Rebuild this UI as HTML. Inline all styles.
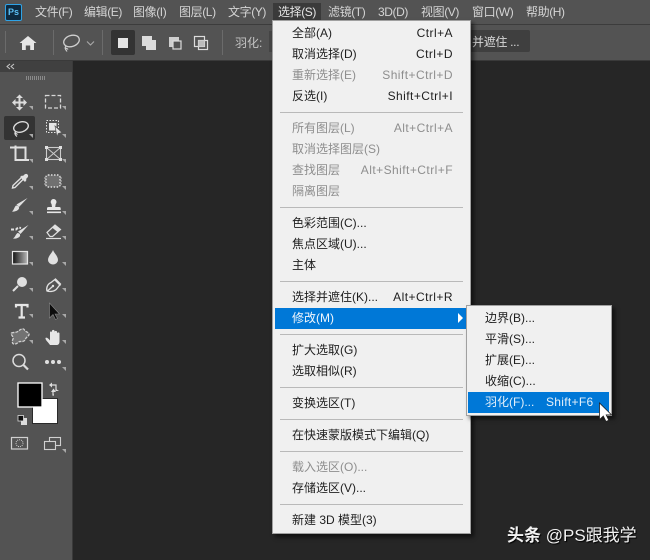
<!DOCTYPE html>
<html><head><meta charset="utf-8">
<style>
html,body{margin:0;padding:0}
body{width:650px;height:560px;overflow:hidden;position:relative;background:#262626;font-family:"Liberation Sans","Noto Sans CJK SC",sans-serif;font-size:12px;color:#222}
.a{position:absolute}
.mb{position:absolute;top:3px;height:18px;line-height:18px;color:#d4d4d4;font-size:12px;white-space:nowrap;letter-spacing:-.4px}
.i{position:absolute;left:19px;height:21px;line-height:21px;white-space:nowrap;color:#1e1e1e}
.k{position:absolute;right:17px;height:21px;line-height:21px;white-space:nowrap;color:#1e1e1e;letter-spacing:.45px}
.d{color:#8e8e8e}
.s{position:absolute;left:7px;right:7px;height:1px;background:#b9b9b9}
svg{position:absolute;left:0;top:0}
</style></head><body>
<div class="a" style="left:0;top:0;width:650px;height:24px;background:#535353"></div>
<div class="a" style="left:0;top:24px;width:650px;height:1px;background:#3c3c3c"></div>
<div class="a" style="left:0;top:25px;width:650px;height:35px;background:#535353"></div>
<div class="a" style="left:0;top:60px;width:650px;height:1px;background:#3a3a3a"></div>
<div class="a" style="left:0;top:61px;width:72px;height:499px;background:#535353"></div>
<div class="a" style="left:0;top:61px;width:72px;height:11px;background:#404040"></div>
<div class="a" style="left:72px;top:61px;width:1px;height:499px;background:#3a3a3a"></div>
<div class="a" style="left:5px;top:4px;width:15px;height:15px;background:#0e2a3f;border:1px solid #2fa3e6;border-radius:2px;color:#5cc0f5;font-size:9px;font-weight:bold;line-height:15px;text-align:center">Ps</div>
<div class="mb" style="left:35px">文件(F)</div>
<div class="mb" style="left:84px">编辑(E)</div>
<div class="mb" style="left:133px">图像(I)</div>
<div class="mb" style="left:179px">图层(L)</div>
<div class="mb" style="left:228px">文字(Y)</div>
<div class="a" style="left:273px;top:3px;width:48px;height:17px;background:#3a3a3a"></div>
<div class="mb" style="left:278px;color:#e4e4e4">选择(S)</div>
<div class="mb" style="left:328px">滤镜(T)</div>
<div class="mb" style="left:378px">3D(D)</div>
<div class="mb" style="left:421px">视图(V)</div>
<div class="mb" style="left:472px">窗口(W)</div>
<div class="mb" style="left:526px">帮助(H)</div>

<svg width="650" height="560" viewBox="0 0 650 560" fill="none">
<!-- grips / separators -->
<g fill="#6b6b6b"><rect x="5" y="31" width="1" height="22"/><rect x="53" y="30" width="1" height="25"/><rect x="102" y="30" width="1" height="25"/><rect x="222" y="30" width="1" height="25"/></g>
<!-- home -->
<path d="M28 36l8.500 7h-2.500v7h-3.800v-4.500h-4.400v4.500h-3.800v-7h-2.500z" fill="#e6e6e6"/>
<!-- lasso options -->
<ellipse cx="71.500" cy="41" rx="8" ry="5.500" transform="rotate(-18 71.500 41)" stroke="#cfcfcf" stroke-width="1.300"/>
<path d="M66 46c-2 2 0 4 1 5.500M65 47.500c1 1 2.500 1 3 2" stroke="#cfcfcf" stroke-width="1.100"/>
<path d="M87 41.500l3.500 3.500 3.500-3.500" stroke="#aaa" stroke-width="1.100"/>
<rect x="111" y="30" width="24" height="25" rx="2" fill="#333"/>
<rect x="118" y="38" width="10" height="10" fill="#e4e4e4"/>
<rect x="142" y="36" width="10" height="10" fill="#dcdcdc"/><rect x="146" y="40" width="10" height="10" fill="#dcdcdc"/>
<rect x="169" y="37" width="10" height="10" fill="#cfcfcf"/><rect x="173" y="41" width="8" height="8" fill="#535353" stroke="#dcdcdc" stroke-width="1.200"/>
<rect x="194.500" y="36.500" width="10" height="10" stroke="#dcdcdc" stroke-width="1.200"/><rect x="198.500" y="40.500" width="9" height="9" stroke="#dcdcdc" stroke-width="1.200"/><rect x="198.500" y="40.500" width="6" height="6" fill="#bbb"/>
<!-- panel top -->
<path d="M10 64l-3 2.500 3 2.500M14 64l-3 2.500 3 2.500" stroke="#c8c8c8"/>
<g fill="#8a8a8a"><rect x="26" y="76" width="1" height="4"/><rect x="28" y="76" width="1" height="4"/><rect x="30" y="76" width="1" height="4"/><rect x="32" y="76" width="1" height="4"/><rect x="34" y="76" width="1" height="4"/><rect x="36" y="76" width="1" height="4"/><rect x="38" y="76" width="1" height="4"/><rect x="40" y="76" width="1" height="4"/><rect x="42" y="76" width="1" height="4"/><rect x="44" y="76" width="1" height="4"/></g>
<!-- selected tool bg -->
<rect x="4" y="116" width="31" height="24" rx="2" fill="#333"/>
<!-- corner marks -->
<g fill="#a8a8a8">
<path d="M33 110v-4h-4z M66 110v-4h-4z M33 138v-4h-4z M66 138v-4h-4z M33 163v-4h-4z M66 163v-4h-4z M33 190v-4h-4z M66 190v-4h-4z M33 215v-4h-4z M66 215v-4h-4z M33 240v-4h-4z M66 240v-4h-4z M33 266v-4h-4z M66 266v-4h-4z M33 292v-4h-4z M66 292v-4h-4z M33 318v-4h-4z M66 318v-4h-4z M33 344v-4h-4z M66 344v-4h-4z M66 371v-4h-4z M66 453v-4h-4z"/>
</g>
<!-- move -->
<path d="M19.500 96v13M13 102.500h13" stroke="#dcdcdc" stroke-width="2"/>
<path d="M19.500 94.500l-3.500 3.500h7zM19.500 110.500l-3.500-3.500h7zM12 102.500l3.500-3.500v7zM27 102.500l-3.500-3.500v7z" fill="#dcdcdc"/>
<!-- marquee -->
<rect x="45.500" y="95.500" width="15" height="12.500" stroke="#d8d8d8" stroke-width="1.300" stroke-dasharray="4 2"/>
<!-- lasso -->
<ellipse cx="21" cy="127" rx="7.500" ry="5" transform="rotate(-18 21 127)" stroke="#dcdcdc" stroke-width="1.400"/>
<path d="M16 131.500c-2 1.500-1 3.500 1 5M15 133c1 .5 2 1 2.500 1.500" stroke="#dcdcdc" stroke-width="1.200"/>
<!-- object select -->
<rect x="46.500" y="120.500" width="12" height="12" stroke="#e4e4e4" stroke-dasharray="1.500 1.500"/>
<rect x="49" y="123" width="7.500" height="7.500" fill="#e4e4e4"/>
<path d="M55 126l7 6.500-3.800 1-1.200 3.500z" fill="#e4e4e4" stroke="#535353" stroke-width=".7"/>
<!-- crop -->
<path d="M10 147.500h15.500v12.500M15.500 145.500v14.500h13.500" stroke="#e0e0e0" stroke-width="2"/>
<!-- slice frame -->
<rect x="46.500" y="147.500" width="14" height="12" stroke="#ccc" stroke-width="1.100"/>
<path d="M46.500 147.500l14 12M60.500 147.500l-14 12" stroke="#ccc"/>
<g fill="#e0e0e0"><rect x="45" y="146" width="3" height="3"/><rect x="59" y="146" width="3" height="3"/><rect x="45" y="158" width="3" height="3"/><rect x="59" y="158" width="3" height="3"/></g>
<!-- eyedropper -->
<path d="M21 178l-8 7.500-.5 2.500 2.500-.5 8-8" stroke="#e0e0e0" stroke-width="1.400"/>
<path d="M20 177l5 5 1.500-2-.5-1c2.500-2 2.500-3.500 1.500-4.500s-2.500-1-4.500 1.500l-1-.5z" fill="#e0e0e0"/>
<!-- healing -->
<rect x="46" y="175" width="14" height="12" rx="2" fill="#707070" stroke="#e0e0e0" stroke-dasharray="1.500 1.500" stroke-width="1.400"/>
<path d="M44 178h2M44 181h2M44 184h2M60 178h2M60 181h2M60 184h2" stroke="#ddd" stroke-width=".8"/>
<!-- brush -->
<path d="M27.500 198l-8.500 9-2.500-2.500z" fill="#e0e0e0"/><path d="M16 205.500c2 0 3.500 1.500 3 3-1 2.500-5 3.500-7 3 2-1.500 2-4 4-6z" fill="#e0e0e0"/>
<!-- stamp -->
<path d="M53.500 199a3 3 0 0 1 2.200 5l-.5 3h4c1 0 1.500.5 1.500 1.500v1.500H47v-1.500c0-1 .5-1.500 1.500-1.500h3.500l-.5-3a3 3 0 0 1 2-5z" fill="#e6e6e6"/><rect x="47" y="211.500" width="14" height="1.600" fill="#e6e6e6"/>
<!-- history brush -->
<path d="M28.500 225l-8 9-2.500-2.500z" fill="#e0e0e0"/><path d="M17.500 233c2 0 3 1.500 2.500 3-1 2-4.500 3-7 2.500 2-1 2.500-4 4.500-5.500z" fill="#e0e0e0"/>
<path d="M11 229.500h5c2-2 3-2 5-1.500" stroke="#e0e0e0" stroke-width="2" stroke-dasharray="3 1.500"/>
<!-- eraser -->
<path d="M47 232.500l8-7.500 5.500 4.500-8 7h-2.500z" stroke="#e0e0e0" stroke-width="1.200"/><path d="M52 227.500l3-2.500 5.500 4.500-3 2.500z" fill="#e0e0e0"/><path d="M46 238.500h15" stroke="#e0e0e0" stroke-width="1.200"/>
<!-- gradient -->
<defs><linearGradient id="g"><stop offset="0" stop-color="#111"/><stop offset="1" stop-color="#b8b8b8"/></linearGradient></defs>
<rect x="12.500" y="251.500" width="15" height="12.500" fill="url(#g)" stroke="#e6e6e6" stroke-width="1.200"/>
<!-- blur drop -->
<path d="M53 250c1 3 5 6 5 10a5 4.500 0 0 1-10 0c0-4 4-7 5-10z" fill="#e0e0e0"/>
<!-- dodge -->
<circle cx="22" cy="282" r="5" fill="#e0e0e0"/><path d="M18 286l-5 5" stroke="#e0e0e0" stroke-width="2"/>
<!-- pen -->
<path d="M47 291c-1-3 .5-7 4-8.500l4.500-3.500 5 5-3.500 4.500c-2 3-7 3.500-10 2.500zM47.500 291l5-4.500M54.500 279.500l6 6" stroke="#e0e0e0" stroke-width="1.300"/>
<circle cx="53" cy="286" r="1.200" fill="#e0e0e0"/>
<!-- type -->
<path d="M16 307.500v-2.500h11.500v2.500M21.700 305v12.500M18.500 317.500h6.500" stroke="#e6e6e6" stroke-width="2.200"/>
<!-- direct select -->
<path d="M49.500 303v15l3.500-3.500 2.500 5 2-1-2.500-4.500h4.500z" fill="#0c0c0c" stroke="#888" stroke-width=".6"/>
<!-- custom shape -->
<path d="M11.500 333c2-1 5 0 7-2s5-3 6-1 4 2 4.500 4-3 3-3.500 5-3 3-5 2.500-3 3-6.500 2.500c-2 0-2-3-1-5s-3-5-1.500-6z" fill="#727272" stroke="#d0d0d0" stroke-width="1.300" stroke-dasharray="3 1"/>
<!-- hand -->
<path d="M50 345c-1-2-5-5-4.500-7 1-1 3 .5 4.500 2.500v-8c0-1.500 2-1.500 2 0v-1.500c0-1.500 2.500-1.500 2.500 0v1c0-1.500 2.500-1.500 2.500 0v1.500c0-1.500 2.500-1.500 2.500 0v8c0 2-1 3.500-2.500 3.500z" fill="#e6e6e6"/>
<!-- zoom -->
<circle cx="19" cy="360.500" r="6" stroke="#dcdcdc" stroke-width="1.500"/><path d="M23.500 365l4.500 4.500" stroke="#dcdcdc" stroke-width="2.200"/>
<!-- more -->
<g fill="#e0e0e0"><circle cx="47" cy="362" r="2"/><circle cx="53" cy="362" r="2"/><circle cx="59" cy="362" r="2"/></g>
<!-- colors -->
<rect x="32.500" y="398.500" width="25" height="25" fill="#fff" stroke="#2a2a2a"/>
<rect x="18" y="383" width="24" height="24" fill="#000" stroke="#fff" stroke-width="1.300"/>
<path d="M50 385h6v6M54 395h-1v-4" stroke="#ddd" stroke-width="1.200"/>
<path d="M49 385l3-2.500v5zM53.500 388.500l2.500 3.500h-5zM56 389l3 2-3 0z" fill="#ddd"/>
<rect x="21" y="418" width="6" height="7" fill="#dcdcdc"/><rect x="18" y="415.500" width="5.500" height="5.500" fill="#111" stroke="#ddd" stroke-width=".8"/>
<!-- quick mask -->
<rect x="11.500" y="437.500" width="16" height="11.500" stroke="#d0d0d0" stroke-width="1.200"/><circle cx="19.500" cy="443.200" r="3.500" stroke="#d0d0d0" stroke-dasharray="1 1"/>
<!-- screen mode -->
<rect x="49.500" y="437.500" width="11" height="8" stroke="#d0d0d0" stroke-width="1.100"/><rect x="44.500" y="441.500" width="11" height="8" fill="#535353" stroke="#d0d0d0" stroke-width="1.100"/>
</svg>

<div class="a" style="left:235px;top:35px;color:#c4c4c4;font-size:12px;line-height:16px">羽化:</div>
<div class="a" style="left:269px;top:31px;width:4px;height:21px;background:#454545"></div>
<div class="a" style="left:470px;top:30px;width:60px;height:22px;background:#3f3f3f;border-radius:2px"></div>
<div class="a" style="left:472px;top:34px;color:#d8d8d8;font-size:12px;line-height:16px;white-space:nowrap;letter-spacing:-.3px">并遮住 ...</div>

<!-- main menu -->
<div class="a" style="left:272px;top:20px;width:199px;height:514px;background:#f0f0f0;border:1px solid #a0a0a0;box-sizing:border-box;box-shadow:3px 3px 4px rgba(0,0,0,.55)">
<div class="a" style="left:2px;top:287px;width:193px;height:21px;background:#0078d7"></div>
<div class="i" style="top:2px">全部(A)</div><div class="k" style="top:2px">Ctrl+A</div>
<div class="i" style="top:23px">取消选择(D)</div><div class="k" style="top:23px">Ctrl+D</div>
<div class="i d" style="top:44px">重新选择(E)</div><div class="k d" style="top:44px">Shift+Ctrl+D</div>
<div class="i" style="top:65px">反选(I)</div><div class="k" style="top:65px">Shift+Ctrl+I</div>
<div class="s" style="top:91px"></div>
<div class="i d" style="top:97px">所有图层(L)</div><div class="k d" style="top:97px">Alt+Ctrl+A</div>
<div class="i d" style="top:118px">取消选择图层(S)</div>
<div class="i d" style="top:139px">查找图层</div><div class="k d" style="top:139px">Alt+Shift+Ctrl+F</div>
<div class="i d" style="top:160px">隔离图层</div>
<div class="s" style="top:186px"></div>
<div class="i" style="top:192px">色彩范围(C)...</div>
<div class="i" style="top:213px">焦点区域(U)...</div>
<div class="i" style="top:234px">主体</div>
<div class="s" style="top:260px"></div>
<div class="i" style="top:266px">选择并遮住(K)...</div><div class="k" style="top:266px">Alt+Ctrl+R</div>
<div class="i" style="top:287px;color:#f0f6fc">修改(M)</div>
<div class="a" style="left:185px;top:292px;width:0;height:0;border-left:5px solid #fff;border-top:5px solid transparent;border-bottom:5px solid transparent"></div>
<div class="s" style="top:313px"></div>
<div class="i" style="top:319px">扩大选取(G)</div>
<div class="i" style="top:340px">选取相似(R)</div>
<div class="s" style="top:366px"></div>
<div class="i" style="top:372px">变换选区(T)</div>
<div class="s" style="top:398px"></div>
<div class="i" style="top:404px">在快速蒙版模式下编辑(Q)</div>
<div class="s" style="top:430px"></div>
<div class="i d" style="top:436px">载入选区(O)...</div>
<div class="i" style="top:457px">存储选区(V)...</div>
<div class="s" style="top:483px"></div>
<div class="i" style="top:489px">新建 3D 模型(3)</div>
</div>

<!-- submenu -->
<div class="a" style="left:466px;top:305px;width:146px;height:111px;background:#f0f0f0;border:1px solid #a0a0a0;box-sizing:border-box;box-shadow:3px 3px 4px rgba(0,0,0,.55)">
<div class="a" style="left:1px;top:86px;width:141px;height:21px;background:#0078d7"></div>
<div class="i" style="top:2px;left:18px">边界(B)...</div>
<div class="i" style="top:23px;left:18px">平滑(S)...</div>
<div class="i" style="top:44px;left:18px">扩展(E)...</div>
<div class="i" style="top:65px;left:18px">收缩(C)...</div>
<div class="i" style="top:86px;left:18px;color:#e4f0fa">羽化(F)...</div>
<div class="i" style="top:86px;left:79px;color:#e4f0fa;letter-spacing:.3px">Shift+F6</div>
</div>
<svg width="650" height="560" viewBox="0 0 650 560"><path d="M599.500 403v16.500l3.800-3.500 2.700 5.500 2.800-1.200-2.600-5.400h5.300z" fill="#fff" stroke="#222" stroke-width=".8"/></svg>

<div class="a" style="left:507px;top:525px;color:#f2f2f2;font-size:17px;line-height:22px;white-space:nowrap;text-shadow:1px 1px 1px #000"><b>头条</b> @PS跟我学</div>
</body></html>
